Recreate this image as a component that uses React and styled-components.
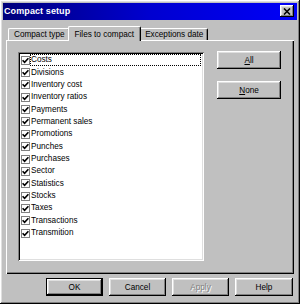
import React from 'react'
import styled, { createGlobalStyle } from 'styled-components'

const files = [
  'Costs',
  'Divisions',
  'Inventory cost',
  'Inventory ratios',
  'Payments',
  'Permanent sales',
  'Promotions',
  'Punches',
  'Purchases',
  'Sector',
  'Statistics',
  'Stocks',
  'Taxes',
  'Transactions',
  'Transmition',
]

const tabs = ['Compact type', 'Files to compact', 'Exceptions date']

const GlobalStyle = createGlobalStyle`
  html, body {
    margin: 0;
    padding: 0;
    background: #c0c0c0;
  }
  * {
    box-sizing: border-box;
  }
`

const raised = `
  box-shadow: inset -1px -1px #000, inset 1px 1px #fff,
    inset -2px -2px #808080, inset 2px 2px #dfdfdf;
`

const Window = styled.div`
  width: 300px;
  height: 304px;
  padding: 3px;
  display: flex;
  flex-direction: column;
  background: #c0c0c0;
  font-family: 'Liberation Sans', Arial, sans-serif;
  font-size: 8.2px;
  color: #000;
  ${raised}
`

const TitleBar = styled.div`
  height: 17px;
  flex: 0 0 17px;
  display: flex;
  align-items: center;
  justify-content: space-between;
  padding: 0 3px 1px 1px;
  background: linear-gradient(to right, #00007c 0%, #0000d0 50%, #0000f8 100%);
`

const Title = styled.span`
  color: #fff;
  font-weight: bold;
  font-size: 9px;
  letter-spacing: 0.1px;
`

const CloseButton = styled.div`
  width: 14px;
  height: 12px;
  display: flex;
  align-items: center;
  justify-content: center;
  background: #c0c0c0;
  ${raised}
`

const Body = styled.div`
  flex: 1;
  display: flex;
  flex-direction: column;
  padding: 6px 3px 0 3px;
`

const TabStrip = styled.div`
  height: 14px;
  display: flex;
  align-items: flex-end;
  padding-left: 2px;
  position: relative;
  z-index: 1;
`

const Tab = styled.div`
  height: ${(p) => (p.$active ? '15px' : '12px')};
  margin: ${(p) => (p.$active ? '0 -2px -1px' : '0')};
  padding: ${(p) => (p.$active ? '1px 6px 0' : '0 4px 0 5px')};
  display: flex;
  align-items: center;
  background: #c0c0c0;
  border-top: 1px solid #fff;
  border-left: 1px solid #fff;
  border-right: 1px solid #000;
  border-radius: 2px 2px 0 0;
  box-shadow: inset -1px 0 #808080;
  white-space: nowrap;
  position: relative;
  z-index: ${(p) => (p.$active ? 2 : 1)};
`

const Panel = styled.div`
  height: 234px;
  flex: 0 0 234px;
  display: flex;
  gap: 13px;
  padding: 12px 13px 0 12px;
  box-shadow: inset 1px 1px #fff, inset -1px -1px #000, inset -2px -2px #808080;
`

const ListBox = styled.div`
  width: 186px;
  height: 209px;
  padding: 2px;
  background: #fff;
  box-shadow: inset 1px 1px #808080, inset -1px -1px #fff,
    inset 2px 2px #000, inset -2px -2px #dfdfdf;
`

const Row = styled.div`
  height: 12.36px;
  display: flex;
  align-items: center;
  padding-left: 1px;
`

const Check = styled.span`
  width: 9px;
  height: 9px;
  flex: 0 0 9px;
  display: flex;
  align-items: center;
  justify-content: center;
  background: #fff;
  box-shadow: inset 1px 1px #808080, inset -1px -1px #808080;
`

const Label = styled.span`
  flex: ${(p) => (p.$focused ? 1 : 'none')};
  height: 12px;
  line-height: 12px;
  padding: 0 1px;
  outline: ${(p) => (p.$focused ? '1px dotted #000' : 'none')};
  outline-offset: -1px;
  margin-right: ${(p) => (p.$focused ? '1px' : '0')};
`

const SideButtons = styled.div`
  display: flex;
  flex-direction: column;
  gap: 12px;
  margin-top: -1px;
`

const Button = styled.div`
  width: ${(p) => p.$width || 57}px;
  height: 18px;
  display: flex;
  align-items: center;
  justify-content: center;
  background: #c0c0c0;
  color: ${(p) => (p.$disabled ? '#808080' : '#000')};
  text-shadow: ${(p) => (p.$disabled ? '1px 1px #fff' : 'none')};
  ${raised}
  ${(p) =>
    p.$default &&
    `box-shadow: inset 0 0 0 1px #000, inset -2px -2px #000, inset 2px 2px #fff,
      inset -3px -3px #808080, inset 3px 3px #dfdfdf;`}
`

const Footer = styled.div`
  display: flex;
  justify-content: flex-end;
  gap: 6px;
  padding: 4px 1px 0 0;
`

const CheckMark = () => (
  <svg width="7" height="7" viewBox="0 0 7 7">
    <path d="M0.6 3.2 L2.6 5.3 L6.4 1.2" fill="none" stroke="#000" strokeWidth="1.6" />
  </svg>
)

const CloseIcon = () => (
  <svg width="8" height="7" viewBox="0 0 8 7">
    <path d="M1 0.5 L7 6.5 M7 0.5 L1 6.5" stroke="#000" strokeWidth="1.6" />
  </svg>
)

export default function App() {
  return (
    <>
      <GlobalStyle />
      <Window>
        <TitleBar>
          <Title>Compact setup</Title>
          <CloseButton>
            <CloseIcon />
          </CloseButton>
        </TitleBar>
        <Body>
          <TabStrip>
            {tabs.map((t) => (
              <Tab key={t} $active={t === 'Files to compact'}>
                {t}
              </Tab>
            ))}
          </TabStrip>
          <Panel>
            <ListBox>
              {files.map((f, i) => (
                <Row key={f}>
                  <Check>
                    <CheckMark />
                  </Check>
                  <Label $focused={i === 0}>{f}</Label>
                </Row>
              ))}
            </ListBox>
            <SideButtons>
              <Button $width={64}>
                <u>A</u>ll
              </Button>
              <Button $width={64}>
                <u>N</u>one
              </Button>
            </SideButtons>
          </Panel>
          <Footer>
            <Button $default>OK</Button>
            <Button>Cancel</Button>
            <Button $disabled>Apply</Button>
            <Button $width={58}>Help</Button>
          </Footer>
        </Body>
      </Window>
    </>
  )
}
